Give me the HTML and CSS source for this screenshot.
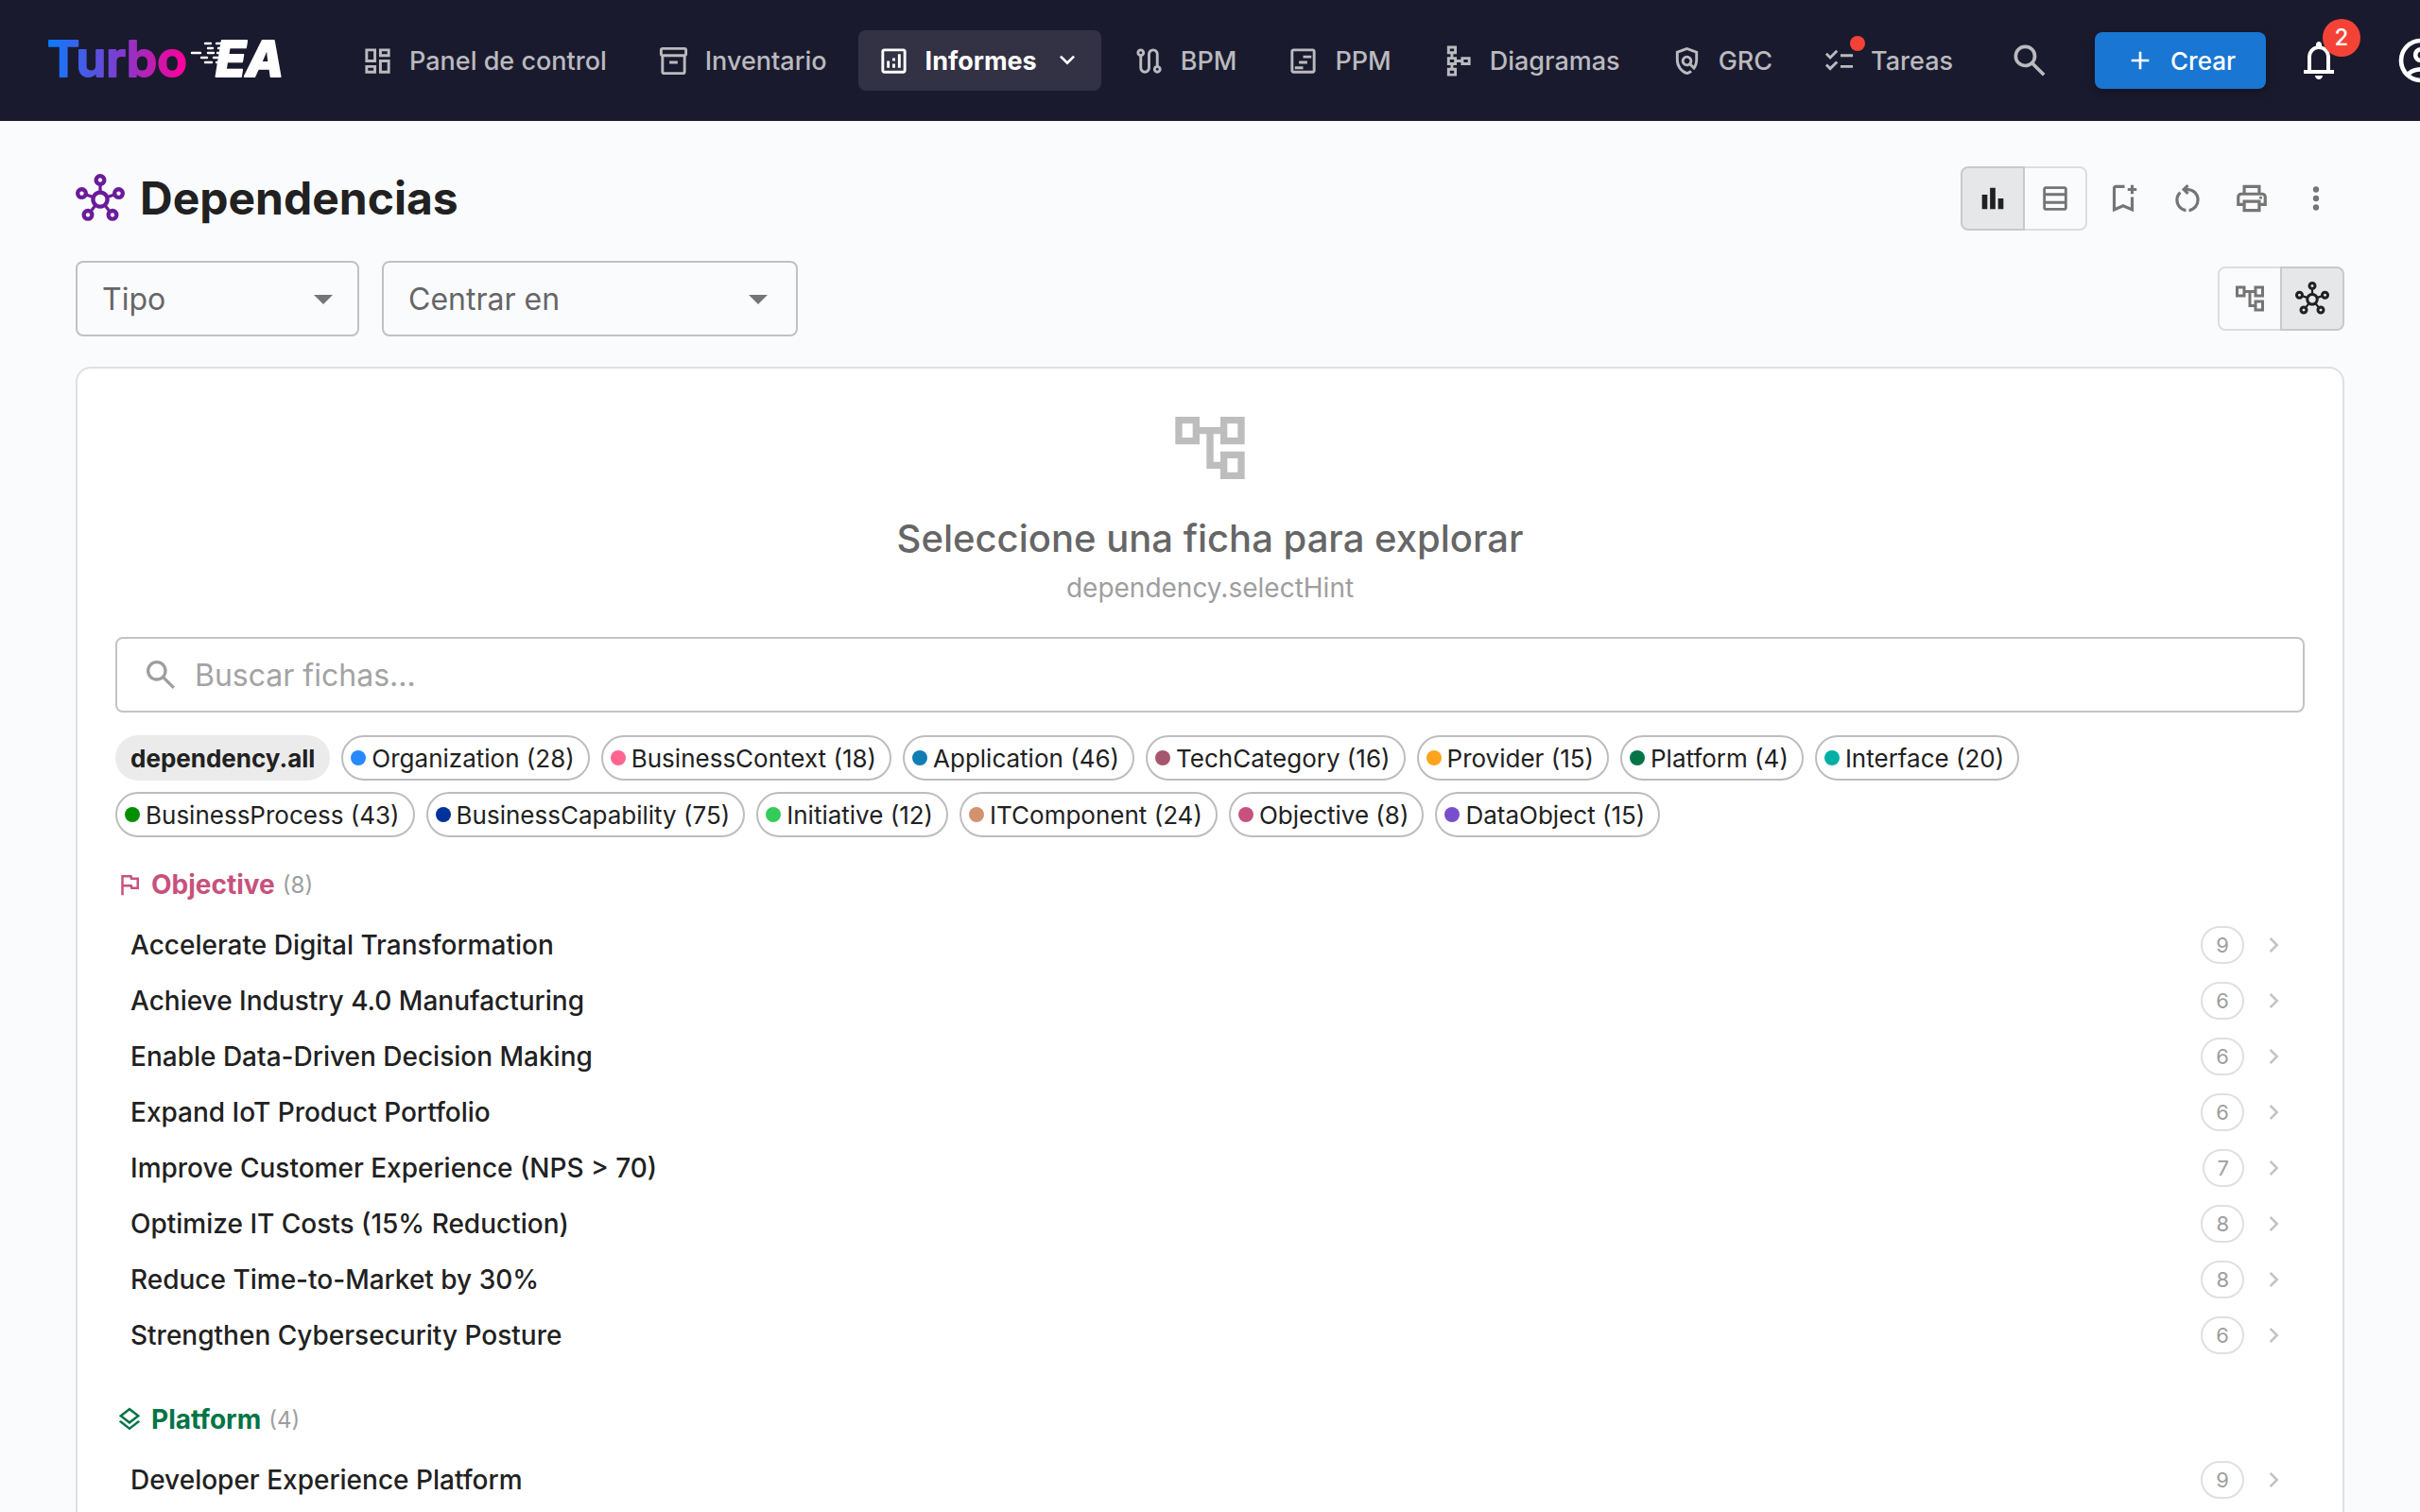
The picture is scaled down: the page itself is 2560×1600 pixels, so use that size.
FILE: index.html
```html
<!DOCTYPE html>
<html lang="es">
<head>
  <meta charset="UTF-8" />
  <meta name="viewport" content="width=device-width, initial-scale=1" />
  <title>Dependencias - Turbo EA</title>
  <link rel="stylesheet" href="styles.css">
</head>
<body>
  <!-- icon set -->
  <svg class="sprite" aria-hidden="true">
    <symbol id="i-dashboard" viewBox="0 -960 960 960"><path d="M520-600v-240h320v240H520ZM120-440v-400h320v400H120Zm400 320v-400h320v400H520Zm-400 0v-240h320v240H120Zm80-400h160v-240H200v240Zm400 320h160v-240H600v240Zm0-480h160v-80H600v80ZM200-200h160v-80H200v80Z"/></symbol>
    <symbol id="i-inventory" viewBox="0 -960 960 960"><path d="M200-80q-33 0-56.5-23.5T120-160v-451q-18-11-29-28.5T80-680v-120q0-33 23.5-56.5T160-880h640q33 0 56.5 23.5T880-800v120q0 23-11 40.5T840-611v451q0 33-23.5 56.5T760-80H200Zm0-520v440h560v-440H200Zm-40-80h640v-120H160v120Zm200 280h240v-80H360v80Z"/></symbol>
    <symbol id="i-analytics" viewBox="0 -960 960 960"><path d="M280-280h80v-200h-80v200Zm320 0h80v-400h-80v400Zm-160 0h80v-120h-80v120Zm0-200h80v-80h-80v80ZM200-120q-33 0-56.5-23.5T120-200v-560q0-33 23.5-56.5T200-840h560q33 0 56.5 23.5T840-760v560q0 33-23.5 56.5T760-120H200Zm0-80h560v-560H200v560Z"/></symbol>
    <symbol id="i-route" viewBox="0 -960 960 960"><path d="M360-120q-66 0-113-47t-47-113v-327q-35-13-57.5-43.5T120-720q0-50 35-85t85-35q50 0 85 35t35 85q0 39-22.5 69.5T280-607v327q0 33 23.5 56.5T360-200q33 0 56.5-23.5T440-280v-400q0-66 47-113t113-47q66 0 113 47t47 113v327q35 13 57.5 43.5T840-240q0 50-35 85t-85 35q-50 0-85-35t-35-85q0-39 22.5-70t57.5-43v-327q0-33-23.5-56.5T600-760q-33 0-56.5 23.5T520-680v400q0 66-47 113t-113 47ZM240-680q17 0 28.5-11.5T280-720q0-17-11.5-28.5T240-760q-17 0-28.5 11.5T200-720q0 17 11.5 28.5T240-680Zm480 480q17 0 28.5-11.5T760-240q0-17-11.5-28.5T720-280q-17 0-28.5 11.5T680-240q0 17 11.5 28.5T720-200Z"/></symbol>
    <symbol id="i-timeline" viewBox="0 -960 960 960"><path d="M240-240h240v-80H240v80Zm120-160h240v-80H360v80Zm120-160h240v-80H480v80ZM200-120q-33 0-56.5-23.5T120-200v-560q0-33 23.5-56.5T200-840h560q33 0 56.5 23.5T840-760v560q0 33-23.5 56.5T760-120H200Zm0-80h560v-560H200v560Z"/></symbol>
    <symbol id="i-schema" viewBox="0 -960 960 960"><path fill-rule="evenodd" d="M160-40v-240h100v-80H160v-240h100v-80H160v-240h280v240H340v80h100v80h120v-80h280v240H560v-80H440v80H340v80h100v240H160ZM240-120h120v-80H240v80ZM240-440h120v-80H240v80ZM640-440h120v-80H640v80ZM240-760h120v-80H240v80Z"/></symbol>
    <symbol id="i-policy" viewBox="0 -960 960 960"><path d="M480-80q-139-35-229.5-159.5T160-516v-244l320-120 320 120v244q0 85-29 163.5T688-214L560-342q-18 11-38.5 16.5T480-320q-66 0-113-47t-47-113q0-66 47-113t113-47q66 0 113 47t47 113q0 22-5.5 42.5T618-398l60 60q20-41 31-86t11-92v-189l-240-90-240 90v189q0 121 68 220t172 132q26-8 49.5-20.5T576-214l56 56q-33 27-71.5 47T480-80Zm0-320q33 0 56.5-23.5T560-480q0-33-23.5-56.5T480-560q-33 0-56.5 23.5T400-480q0 33 23.5 56.5T480-400Z"/></symbol>
    <symbol id="i-checklist" viewBox="0 -960 960 960"><path d="M222-200 80-342l56-56 85 85 170-170 56 57-225 226Zm0-320L80-662l56-56 85 85 170-170 56 57-225 226Zm298 240v-80h360v80H520Zm0-320v-80h360v80H520Z"/></symbol>
    <symbol id="i-search" viewBox="0 -960 960 960"><path d="M784-120 532-372q-30 24-69 38t-83 14q-109 0-184.5-75.5T120-580q0-109 75.5-184.5T380-840q109 0 184.5 75.5T640-580q0 44-14 83t-38 69l252 252-56 56ZM380-400q75 0 127.5-52.5T560-580q0-75-52.5-127.5T380-760q-75 0-127.5 52.5T200-580q0 75 52.5 127.5T380-400Z"/></symbol>
    <symbol id="i-add" viewBox="0 -960 960 960"><path d="M440-440H200v-80h240v-240h80v240h240v80H520v240h-80v-240Z"/></symbol>
    <symbol id="i-bell" viewBox="0 -960 960 960"><path d="M160-200v-80h80v-280q0-83 50-147.5T420-792v-28q0-25 17.5-42.5T480-880q25 0 42.5 17.5T540-820v28q80 20 130 84.5T720-560v280h80v80H160Zm320 120q-33 0-56.5-23.5T400-160h160q0 33-23.5 56.5T480-80ZM320-280h320v-280q0-66-47-113t-113-47q-66 0-113 47t-47 113v280Z"/></symbol>
    <symbol id="i-account" viewBox="0 -960 960 960"><path d="M234-276q51-39 114-61.5T480-360q69 0 132 22.5T726-276q35-41 54.5-93T800-480q0-133-93.5-226.5T480-800q-133 0-226.5 93.5T160-480q0 59 19.5 111t54.5 93Zm246-164q-59 0-99.5-40.5T340-580q0-59 40.5-99.5T480-720q59 0 99.5 40.5T620-580q0 59-40.5 99.5T480-440Zm0 360q-83 0-156-31.5T197-197q-54-54-85.5-127T80-480q0-83 31.5-156T197-763q54-54 127-85.5T480-880q83 0 156 31.5T763-763q54 54 85.5 127T880-480q0 83-31.5 156T763-197q-54 54-127 85.5T480-80Zm0-80q53 0 100-15.5t86-44.5q-39-29-86-44.5T480-280q-53 0-100 15.5T294-220q39 29 86 44.5T480-160Zm0-360q26 0 43-17t17-43q0-26-17-43t-43-17q-26 0-43 17t-17 43q0 26 17 43t43 17Z"/></symbol>
    <symbol id="i-down" viewBox="0 -960 960 960"><path d="M480-344 240-584l56-56 184 184 184-184 56 56-240 240Z"/></symbol>
    <symbol id="i-drop" viewBox="0 -960 960 960"><path d="M480-360 280-560h400L480-360Z"/></symbol>
    <symbol id="i-right" viewBox="0 -960 960 960"><path d="M504-480 320-664l56-56 240 240-240 240-56-56 184-184Z"/></symbol>
    <symbol id="i-bars" viewBox="0 -960 960 960"><path d="M640-160v-320h160v320H640Zm-240 0v-640h160v640H400Zm-240 0v-430h160v430H160Z"/></symbol>
    <symbol id="i-rows" viewBox="0 -960 960 960"><path d="M760-200v-120H200v120h560Zm0-200v-160H200v160h560Zm0-240v-120H200v120h560ZM200-120q-33 0-56.5-23.5T120-200v-560q0-33 23.5-56.5T200-840h560q33 0 56.5 23.5T840-760v560q0 33-23.5 56.5T760-120H200Z"/></symbol>
    <symbol id="i-bookmark" viewBox="0 -960 960 960"><path d="M200-120v-640q0-33 23.5-56.5T280-840h240v80H280v518l200-86 200 86v-278h80v400L480-240 200-120Zm480-480v-80h-80v-80h80v-80h80v80h80v80h-80v80h-80Z"/></symbol>
    <symbol id="i-restart" viewBox="0 -960 960 960"><path d="M440-122q-121-15-200.5-105.5T160-440q0-66 26-126.5T260-672l57 57q-38 34-57.5 79T240-440q0 88 56 155.5T440-202v80Zm80 0v-80q87-16 143.5-83T720-440q0-100-70-170t-170-70h-3l44 44-56 56-140-140 140-140 56 56-44 44h3q134 0 227 93t93 227q0 121-79.5 211.5T520-122Z"/></symbol>
    <symbol id="i-print" viewBox="0 -960 960 960"><path d="M640-640v-120H320v120h-80v-200h480v200h-80Zm80 180q17 0 28.5-11.5T760-500q0-17-11.5-28.5T720-540q-17 0-28.5 11.5T680-500q0 17 11.5 28.5T720-460Zm-80 260v-160H320v160h320Zm80 80H240v-160H80v-240q0-51 35-85.5t85-34.5h560q51 0 85.5 34.5T880-520v240H720v160Zm80-240v-160q0-17-11.5-28.5T760-560H200q-17 0-28.5 11.5T160-520v160h80v-80h480v80h80Z"/></symbol>
    <symbol id="i-more" viewBox="0 0 24 24"><circle cx="12" cy="6" r="2"/><circle cx="12" cy="12" r="2"/><circle cx="12" cy="18" r="2"/></symbol>
    <symbol id="i-tree" viewBox="0 -960 960 960"><path d="M600-120v-120H440v-400h-80v120H80v-320h280v120h240v-120h280v320H600v-120h-80v320h80v-120h280v320H600Zm80-480h120v-160H680v160Zm0 400h120v-160H680v160ZM160-600h120v-160H160v160Z"/></symbol>
    <symbol id="i-hub" viewBox="0 -960 960 960"><path d="M240-40q-50 0-85-35t-35-85q0-50 35-85t85-35q14 0 26 3t23 8l57-71q-28-31-39-70t-5-78l-81-27q-17 25-43 40t-58 15q-50 0-85-35T0-580q0-50 35-85t85-35q50 0 85 35t35 85v8l81 28q20-36 53.5-61t75.5-32v-87q-39-11-64.5-42.5T360-840q0-50 35-85t85-35q50 0 85 35t35 85q0 42-26 73.5T510-724v87q42 7 75.5 32t53.5 61l81-28v-8q0-50 35-85t85-35q50 0 85 35t35 85q0 50-35 85t-85 35q-32 0-58.5-15T739-515l-81 27q6 39-5 77.5T614-340l57 70q11-5 23-7.5t26-2.5q50 0 85 35t35 85q0 50-35 85t-85 35q-50 0-85-35t-35-85q0-20 6.5-38.5T624-232l-57-71q-41 23-87.5 23T392-303l-56 71q11 15 17.5 33.5T360-160q0 50-35 85t-85 35ZM120-540q17 0 28.5-11.5T160-580q0-17-11.5-28.5T120-620q-17 0-28.5 11.5T80-580q0 17 11.5 28.5T120-540Zm120 420q17 0 28.5-11.5T280-160q0-17-11.5-28.5T240-200q-17 0-28.5 11.5T200-160q0 17 11.5 28.5T240-120Zm240-680q17 0 28.5-11.5T520-840q0-17-11.5-28.5T480-880q-17 0-28.5 11.5T440-840q0 17 11.5 28.5T480-800Zm0 440q42 0 71-29t29-71q0-42-29-71t-71-29q-42 0-71 29t-29 71q0 42 29 71t71 29Zm240 240q17 0 28.5-11.5T760-160q0-17-11.5-28.5T720-200q-17 0-28.5 11.5T680-160q0 17 11.5 28.5T720-120Zm120-420q17 0 28.5-11.5T880-580q0-17-11.5-28.5T840-620q-17 0-28.5 11.5T800-580q0 17 11.5 28.5T840-540Z"/></symbol>
    <symbol id="i-flag" viewBox="0 -960 960 960"><path d="M200-120v-680h360l16 80h224v400H520l-16-80H280v280h-80Zm386-280h134v-240H510l-16-80H280v240h290l16 80Z"/></symbol>
    <symbol id="i-layers" viewBox="0 -960 960 960"><path d="M480-118 120-398l66-50 294 228 294-228 66 50-360 280Zm0-202L120-600l360-280 360 280-360 280Zm0-102 230-178-230-178-230 178 230 178Z"/></symbol>
  </svg>

  <header class="topbar">
    <a class="logo" href="#" aria-label="Turbo EA">
      <svg viewBox="0 0 272 72">
        <defs>
          <linearGradient id="logo-grad" gradientUnits="userSpaceOnUse" x1="0" y1="0" x2="148" y2="0">
            <stop offset="0" stop-color="#0a7cff"/>
            <stop offset="0.5" stop-color="#7a3fd0"/>
            <stop offset="0.75" stop-color="#c01cb0"/>
            <stop offset="1" stop-color="#ff0099"/>
          </linearGradient>
        </defs>
        <text class="logo-turbo" x="0" y="53">Turbo</text>
        <text class="logo-ea" x="178" y="53">EA</text>
        <!-- speed lines -->
        <path class="logo-lines" d="M167 18h6M179 18h14M170 23h5M181 23h10M153 28h9M170 28h6M180 28h10M163 33h6M176 33h12M167 38h7M179 38h8"/>
      </svg>
    </a>
    <nav class="nav">
      <a class="nav-item" href="#"><svg class="icon"><use href="#i-dashboard"/></svg>Panel de control</a>
      <a class="nav-item" href="#"><svg class="icon"><use href="#i-inventory"/></svg>Inventario</a>
      <button class="nav-item active" type="button"><svg class="icon"><use href="#i-analytics"/></svg>Informes<svg class="icon caret"><use href="#i-down"/></svg></button>
      <a class="nav-item" href="#"><svg class="icon"><use href="#i-route"/></svg>BPM</a>
      <a class="nav-item" href="#"><svg class="icon"><use href="#i-timeline"/></svg>PPM</a>
      <a class="nav-item" href="#"><svg class="icon"><use href="#i-schema"/></svg>Diagramas</a>
      <a class="nav-item" href="#"><svg class="icon"><use href="#i-policy"/></svg>GRC</a>
      <a class="nav-item" href="#"><span class="badge-wrap"><svg class="icon"><use href="#i-checklist"/></svg><span class="badge-dot"></span></span>Tareas</a>
    </nav>
    <button class="bar-btn search-btn" type="button" aria-label="Buscar"><svg class="icon"><use href="#i-search"/></svg></button>
    <button class="create-btn" type="button"><svg class="icon"><use href="#i-add"/></svg>Crear</button>
    <button class="bar-btn bell-btn" type="button" aria-label="Notificaciones"><svg class="icon"><use href="#i-bell"/></svg><span class="badge">2</span></button>
    <button class="bar-btn account-btn" type="button" aria-label="Cuenta"><svg class="icon"><use href="#i-account"/></svg></button>
  </header>

  <main class="page">
    <div class="page-head">
      <svg class="icon title-icon"><use href="#i-hub"/></svg>
      <h1>Dependencias</h1>
      <div class="toggle">
        <button class="on" type="button" aria-label="Gráfico"><svg class="icon"><use href="#i-bars"/></svg></button>
        <button type="button" aria-label="Tabla"><svg class="icon"><use href="#i-rows"/></svg></button>
      </div>
      <button class="tool" type="button" aria-label="Guardar informe"><svg class="icon"><use href="#i-bookmark"/></svg></button>
      <button class="tool" type="button" aria-label="Restablecer"><svg class="icon"><use href="#i-restart"/></svg></button>
      <button class="tool" type="button" aria-label="Imprimir"><svg class="icon"><use href="#i-print"/></svg></button>
      <button class="tool" type="button" aria-label="Más"><svg class="icon"><use href="#i-more"/></svg></button>
    </div>

    <div class="filters">
      <div class="select type-select">
        <select aria-label="Tipo"><option>Tipo</option></select>
        <svg class="icon"><use href="#i-drop"/></svg>
      </div>
      <div class="select center-select">
        <select aria-label="Centrar en"><option>Centrar en</option></select>
        <svg class="icon"><use href="#i-drop"/></svg>
      </div>
      <div class="toggle view-toggle">
        <button type="button" aria-label="Árbol"><svg class="icon"><use href="#i-tree"/></svg></button>
        <button class="on" type="button" aria-label="Red"><svg class="icon"><use href="#i-hub"/></svg></button>
      </div>
    </div>

    <section class="card">
      <div class="intro">
        <svg class="icon intro-icon"><use href="#i-tree"/></svg>
        <h2>Seleccione una ficha para explorar</h2>
        <p>dependency.selectHint</p>
      </div>

      <label class="search">
        <svg class="icon"><use href="#i-search"/></svg>
        <input type="text" placeholder="Buscar fichas..." aria-label="Buscar fichas" />
      </label>

      <div class="chips">
        <button class="chip chip-all" type="button">dependency.all</button>
        <button class="chip" type="button"><span class="dot organization"></span>Organization (28)</button>
        <button class="chip" type="button"><span class="dot context"></span>BusinessContext (18)</button>
        <button class="chip" type="button"><span class="dot application"></span>Application (46)</button>
        <button class="chip" type="button"><span class="dot tech"></span>TechCategory (16)</button>
        <button class="chip" type="button"><span class="dot provider"></span>Provider (15)</button>
        <button class="chip" type="button"><span class="dot platform"></span>Platform (4)</button>
        <button class="chip" type="button"><span class="dot interface"></span>Interface (20)</button>
        <button class="chip" type="button"><span class="dot process"></span>BusinessProcess (43)</button>
        <button class="chip" type="button"><span class="dot capability"></span>BusinessCapability (75)</button>
        <button class="chip" type="button"><span class="dot initiative"></span>Initiative (12)</button>
        <button class="chip" type="button"><span class="dot component"></span>ITComponent (24)</button>
        <button class="chip" type="button"><span class="dot objective"></span>Objective (8)</button>
        <button class="chip" type="button"><span class="dot data"></span>DataObject (15)</button>
      </div>

      <div class="group">
        <h3 class="group-title objective-title"><svg class="icon"><use href="#i-flag"/></svg>Objective <span class="total">(8)</span></h3>
        <button class="row" type="button"><span class="name">Accelerate Digital Transformation</span><span class="count">9</span><svg class="icon"><use href="#i-right"/></svg></button>
        <button class="row" type="button"><span class="name">Achieve Industry 4.0 Manufacturing</span><span class="count">6</span><svg class="icon"><use href="#i-right"/></svg></button>
        <button class="row" type="button"><span class="name">Enable Data-Driven Decision Making</span><span class="count">6</span><svg class="icon"><use href="#i-right"/></svg></button>
        <button class="row" type="button"><span class="name">Expand IoT Product Portfolio</span><span class="count">6</span><svg class="icon"><use href="#i-right"/></svg></button>
        <button class="row" type="button"><span class="name">Improve Customer Experience (NPS &gt; 70)</span><span class="count">7</span><svg class="icon"><use href="#i-right"/></svg></button>
        <button class="row" type="button"><span class="name">Optimize IT Costs (15% Reduction)</span><span class="count">8</span><svg class="icon"><use href="#i-right"/></svg></button>
        <button class="row" type="button"><span class="name">Reduce Time-to-Market by 30%</span><span class="count">8</span><svg class="icon"><use href="#i-right"/></svg></button>
        <button class="row" type="button"><span class="name">Strengthen Cybersecurity Posture</span><span class="count">6</span><svg class="icon"><use href="#i-right"/></svg></button>
      </div>

      <div class="group">
        <h3 class="group-title platform-title"><svg class="icon"><use href="#i-layers"/></svg>Platform <span class="total">(4)</span></h3>
        <button class="row" type="button"><span class="name">Developer Experience Platform</span><span class="count">9</span><svg class="icon"><use href="#i-right"/></svg></button>
      </div>
    </section>
  </main>
</body>
</html>
```
FILE: styles.css
```css
* {
  box-sizing: border-box;
}
body {
  margin: 0;
  height: 100vh;
  overflow: hidden;
  font-family: Inter, "Liberation Sans", sans-serif;
  font-size: 28px;
  color: #212121;
  background: #fafbfd;
}
button, input, select {
  font-family: inherit;
  color: inherit;
}
button {
  background: none;
  border: none;
  padding: 0;
  cursor: pointer;
}
.sprite {
  display: none;
}
.icon {
  display: block;
  flex: none;
  width: 36px;
  height: 36px;
  fill: currentColor;
}

/* top bar */
.topbar {
  display: flex;
  align-items: center;
  height: 128px;
  padding-left: 50px;
  background: #1a1a2e;
  color: #fff;
}
.logo {
  flex: none;
  margin-right: 40px;
}
.logo svg {
  display: block;
  width: 272px;
  height: 72px;
}
.logo-turbo {
  font-size: 52px;
  font-weight: 600;
  fill: url(#logo-grad);
  stroke: url(#logo-grad);
  stroke-width: 2;
  stroke-linejoin: round;
}
.logo-ea {
  font-size: 52px;
  font-weight: 800;
  font-style: italic;
  fill: #fff;
  stroke: #fff;
  stroke-width: 2;
  stroke-linejoin: round;
}
.logo-lines {
  fill: none;
  stroke: #fff;
  stroke-width: 2.4;
  stroke-linecap: round;
}
.nav {
  display: flex;
  flex: none;
  gap: 13px;
}
.nav-item {
  display: flex;
  align-items: center;
  gap: 16px;
  height: 64px;
  padding: 0 20px;
  border-radius: 8px;
  font-size: 27px;
  font-weight: 500;
  color: #bababf;
  text-decoration: none;
  white-space: nowrap;
}
.nav-item.active {
  background: #333144;
  color: #fff;
  font-weight: 700;
}
.nav-item .icon {
  width: 35px;
  height: 35px;
}
.nav-item .caret {
  width: 32px;
  height: 32px;
}
.badge-wrap {
  position: relative;
}
.badge-dot {
  position: absolute;
  top: -9px;
  right: -10px;
  width: 16px;
  height: 16px;
  border-radius: 50%;
  background: #f44336;
}
.bar-btn {
  display: flex;
  flex: none;
  align-items: center;
  justify-content: center;
  position: relative;
}
.search-btn {
  margin: 0 47px 0 39px;
  color: #bababf;
}
.search-btn .icon {
  width: 44px;
  height: 44px;
}
.create-btn {
  display: flex;
  flex: none;
  align-items: center;
  gap: 16px;
  height: 60px;
  padding: 0 32px;
  border-radius: 8px;
  background: #1976d2;
  color: #fff;
  font-size: 26px;
  font-weight: 500;
  box-shadow: 0 4px 8px rgba(0,0,0,0.3);
}
.create-btn .icon {
  width: 32px;
  height: 32px;
}
.bell-btn {
  margin: 0 56px 0 32px;
}
.bell-btn .icon {
  width: 48px;
  height: 48px;
}
.badge {
  position: absolute;
  top: -20px;
  right: -20px;
  width: 40px;
  height: 40px;
  border-radius: 50%;
  background: #f44336;
  font-size: 24px;
  font-weight: 500;
  line-height: 40px;
  text-align: center;
}
.account-btn .icon {
  width: 56px;
  height: 56px;
}

/* page */
.page {
  padding: 48px 80px;
}
.page-head {
  display: flex;
  align-items: center;
  gap: 8px;
  height: 68px;
}
.title-icon {
  width: 52px;
  height: 52px;
  color: #6a1b9a;
}
h1 {
  flex: 1;
  margin: 0 0 0 8px;
  font-size: 48px;
  line-height: 64px;
  font-weight: 700;
}
.toggle {
  display: flex;
  height: 68px;
}
.toggle button {
  display: flex;
  align-items: center;
  justify-content: center;
  width: 68px;
  border: 2px solid #dcdde0;
  color: #757575;
}
.toggle button:first-child {
  border-radius: 8px 0 0 8px;
}
.toggle button:last-child {
  margin-left: -2px;
  border-radius: 0 8px 8px 0;
}
.toggle .on {
  position: relative;
  z-index: 1;
  background: #e6e7e9;
  border-color: #c8c9cb;
  color: #212121;
}
.toggle .icon {
  width: 34px;
  height: 34px;
}
.tool {
  display: flex;
  align-items: center;
  justify-content: center;
  width: 60px;
  height: 60px;
  color: #757575;
}
.tool .icon {
  width: 38px;
  height: 38px;
}
.filters {
  display: flex;
  align-items: center;
  gap: 24px;
  margin-top: 32px;
}
.view-toggle {
  margin-left: auto;
}
.view-toggle .icon {
  width: 36px;
  height: 36px;
}
.select {
  display: grid;
  align-items: center;
  color: #666;
}
.select select, .select .icon {
  grid-area: 1 / 1;
}
.select select {
  appearance: none;
  width: 100%;
  height: 80px;
  padding: 0 26px;
  border: 2px solid #c0c1c3;
  border-radius: 8px;
  background: transparent;
  font-size: 32px;
}
.select .icon {
  justify-self: end;
  width: 48px;
  height: 48px;
  margin-right: 14px;
  color: #757575;
  pointer-events: none;
}
.type-select {
  width: 300px;
}
.center-select {
  width: 440px;
}
.center-select .icon {
  margin-right: 18px;
}
.card {
  min-height: 100vh;
  margin-top: 32px;
  padding: 40px;
  border: 2px solid #e0e0e0;
  border-radius: 16px;
  background: #fff;
}
.intro {
  display: flex;
  flex-direction: column;
  align-items: center;
}
.intro-icon {
  width: 88px;
  height: 88px;
  color: #bdbdbd;
}
.intro h2 {
  margin: 20px 0 0;
  font-size: 40px;
  line-height: 64px;
  font-weight: 500;
  color: #666;
}
.intro p {
  margin: 0;
  font-size: 28px;
  line-height: 40px;
  color: #9e9e9e;
}
.search {
  display: flex;
  align-items: center;
  gap: 16px;
  height: 80px;
  margin-top: 32px;
  padding: 0 26px;
  border: 2px solid #c4c4c4;
  border-radius: 8px;
  color: #9e9e9e;
}
.search .icon {
  width: 40px;
  height: 40px;
}
.search input {
  flex: 1;
  padding: 0;
  border: none;
  outline: none;
  background: none;
  font-size: 32px;
}
.search input::placeholder {
  color: #a3a3a3;
}
.chips {
  display: flex;
  flex-wrap: wrap;
  gap: 12px;
  margin-top: 24px;
}
.chip {
  display: flex;
  align-items: center;
  gap: 6px;
  height: 48px;
  padding: 0 14px 0 8px;
  border: 2px solid #bdbdbd;
  border-radius: 24px;
  font-size: 26px;
  white-space: nowrap;
}
.chip-all {
  padding: 0 16px;
  border: none;
  background: #ebebeb;
  font-weight: 700;
}
.dot {
  width: 16px;
  height: 16px;
  border-radius: 50%;
}
.organization { background: #2889ff; }
.context { background: #fe6690; }
.application { background: #0f7eb5; }
.tech { background: #a6566d; }
.provider { background: #ffa31f; }
.platform { background: #027446; }
.interface { background: #02afa4; }
.process { background: #028f00; }
.capability { background: #003399; }
.initiative { background: #33cc58; }
.component { background: #d29270; }
.objective { background: #c7527d; }
.data { background: #774fcc; }

.group {
  margin-top: 32px;
}
.group + .group {
  margin-top: 42px;
}
.group-title {
  display: flex;
  align-items: center;
  gap: 8px;
  height: 36px;
  margin: 0 0 16px;
  font-size: 28px;
  font-weight: 700;
}
.group-title .icon {
  width: 30px;
  height: 30px;
}
.objective-title { color: #c7527d; }
.platform-title { color: #027446; }
.total {
  font-size: 24px;
  font-weight: 400;
  color: #9e9e9e;
}
.row {
  display: flex;
  align-items: center;
  gap: 16px;
  width: 100%;
  height: 59px;
  padding: 0 16px;
  font-size: 28px;
  text-align: left;
}
.name {
  flex: 1;
  font-weight: 500;
}
.count {
  height: 40px;
  padding: 0 14px;
  border: 2px solid #e0e0e0;
  border-radius: 20px;
  font-size: 22px;
  line-height: 36px;
  color: #9e9e9e;
}
.row .icon {
  width: 32px;
  height: 32px;
  color: #c4c4c4;
}
```
